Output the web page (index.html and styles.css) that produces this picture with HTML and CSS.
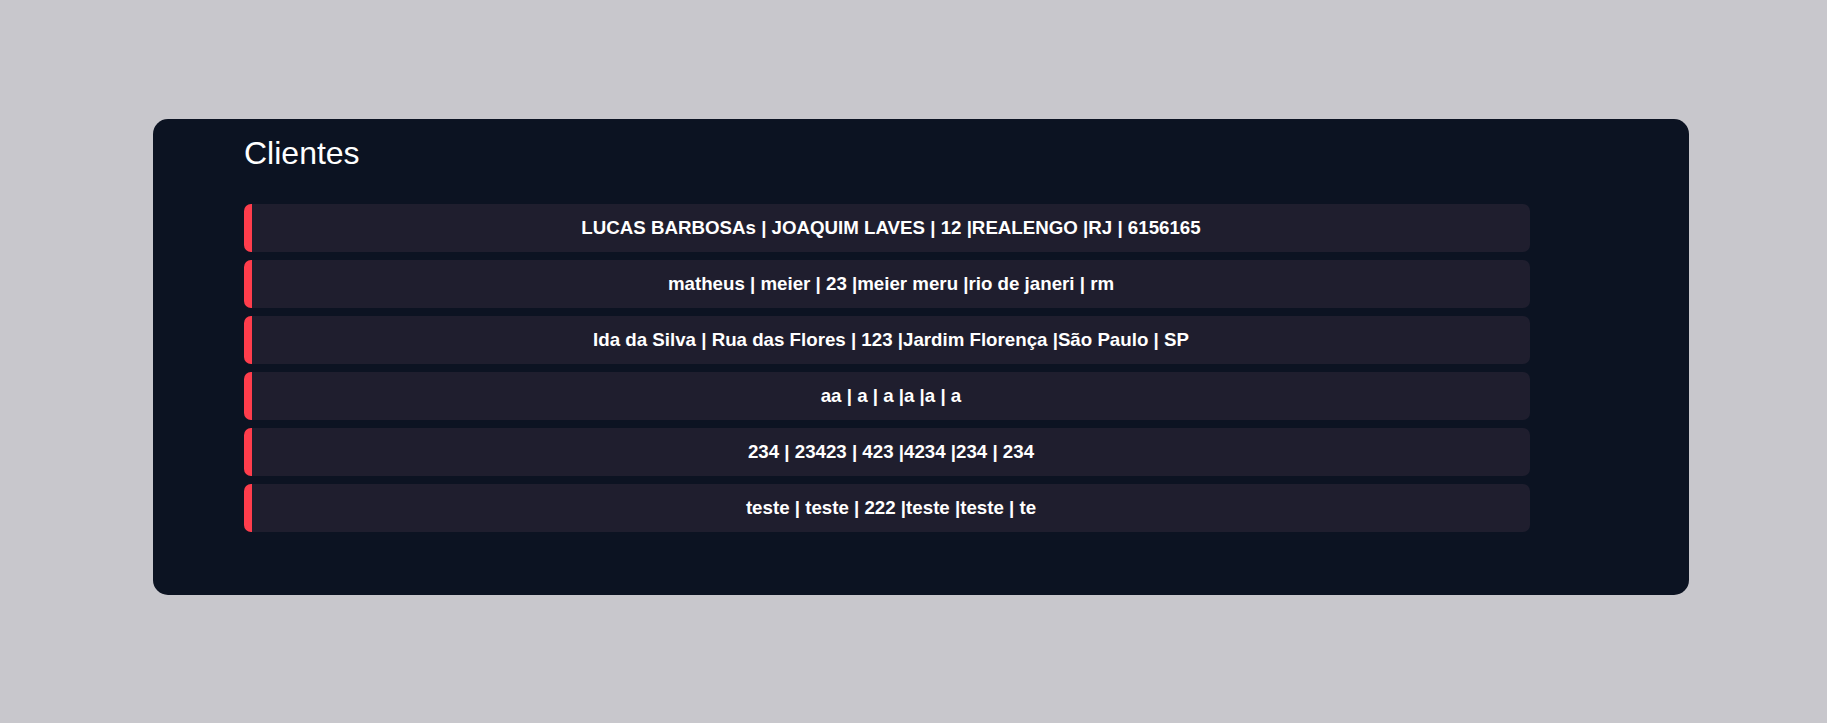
FILE: index.html
```html
<!DOCTYPE html>
<html lang="pt-BR">
<head>
<meta charset="utf-8">
<title>Clientes</title>
<link rel="stylesheet" href="styles.css">
</head>
<body>
  <main class="panel">
    <h1 class="title">Clientes</h1>
    <ul class="list">
      <li class="item">LUCAS BARBOSAs | JOAQUIM LAVES | 12 |REALENGO |RJ | 6156165</li>
      <li class="item">matheus | meier | 23 |meier meru |rio de janeri | rm</li>
      <li class="item">Ida da Silva | Rua das Flores | 123 |Jardim Florença |São Paulo | SP</li>
      <li class="item">aa | a | a |a |a | a</li>
      <li class="item">234 | 23423 | 423 |4234 |234 | 234</li>
      <li class="item">teste | teste | 222 |teste |teste | te</li>
    </ul>
  </main>
</body>
</html>
```
FILE: styles.css
```css
html, body {
  margin: 0;
  padding: 0;
}
body {
  background: #c8c7cc;
  font-family: "Liberation Sans", Arial, sans-serif;
  min-height: 723px;
  padding-top: 119px;
  box-sizing: border-box;
}
.panel {
  margin-left: 153px;
  width: 1536px;
  box-sizing: border-box;
  background: #0c1322;
  border-radius: 15px;
  padding: 16px 159px 63px 91px;
}
.title {
  margin: 0 0 32px 0;
  color: #ffffff;
  font-size: 32px;
  font-weight: normal;
  line-height: 37px;
}
.list {
  list-style: none;
  margin: 0;
  padding: 0;
  display: flex;
  flex-direction: column;
  gap: 8px;
}
.item {
  height: 48px;
  display: flex;
  align-items: center;
  justify-content: center;
  background: #1f1e2e;
  border-left: 8px solid #ff3d4c;
  border-radius: 7px;
  color: #ffffff;
  font-weight: bold;
  font-size: 18.72px;
}
```
